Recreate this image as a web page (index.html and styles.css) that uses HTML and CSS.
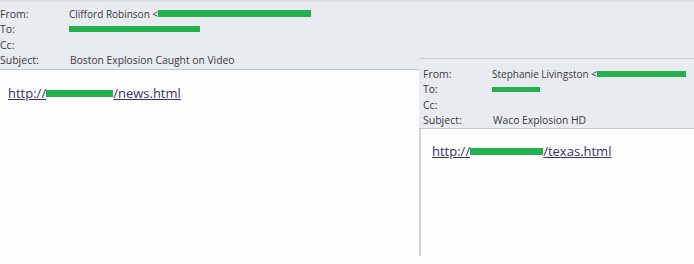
FILE: index.html
```html
<!DOCTYPE html>
<html lang="en">
<head>
    <meta charset="UTF-8">
    <title>Messages</title>
    <link rel="stylesheet" href="styles.css">
</head>
<body>
    <div class="message">
        <div class="header">
            <div class="row"><span class="label">From:</span><span class="value">Clifford Robinson &lt;<span class="redact from-a"></span></span></div>
            <div class="row"><span class="label">To:</span><span class="value"><span class="redact to-a"></span></span></div>
            <div class="row"><span class="label">Cc:</span><span class="value"></span></div>
            <div class="row"><span class="label">Subject:</span><span class="value subj">Boston Explosion Caught on Video</span></div>
        </div>
        <div class="content">
            <a class="link" href="#">http://<span class="redact link-a"></span>/news.html</a>
        </div>
    </div>

    <div class="message popup">
        <div class="header">
            <div class="row"><span class="label">From:</span><span class="value">Stephanie Livingston &lt;<span class="redact from-b"></span></span></div>
            <div class="row"><span class="label">To:</span><span class="value"><span class="redact to-b"></span></span></div>
            <div class="row"><span class="label">Cc:</span><span class="value"></span></div>
            <div class="row"><span class="label">Subject:</span><span class="value subj">Waco Explosion HD</span></div>
        </div>
        <div class="content">
            <a class="link" href="#">http://<span class="redact link-b"></span>/texas.html</a>
        </div>
    </div>
</body>
</html>
```

FILE: styles.css
```css
body {
    margin: 0;
    background: #fdfdfd;
    font-family: "Open Sans", Arial, sans-serif;
    color: #3a3a3a;
    width: 694px;
    height: 264px;
    overflow: hidden;
    position: relative;
}
.message {
    display: flex;
    flex-direction: column;
}
.header {
    background: #e8ebf0;
    border-top: 2px solid #dadde2;
    border-bottom: 1px solid #c4c6ca;
    padding: 4px 0 3px 0;
    height: 60px;
}
.row {
    display: flex;
    height: 15.5px;
    align-items: center;
    font-size: 10px;
}
.label {
    width: 69px;
    flex-shrink: 0;
    font-size: 10.5px;
}
.value {
    display: flex;
    align-items: center;
    white-space: nowrap;
}
.subj {
    font-size: 10.3px;
    padding-left: 1px;
}
.redact {
    display: inline-block;
    background: #22b14c;
    height: 7px;
}
.from-a { width: 153px; }
.to-a { width: 131px; height: 6px; }
.link-a { width: 67px; }
.from-b { width: 89px; height: 6px; }
.to-b { width: 48px; height: 5px; }
.link-b { width: 73px; }
.content {
    padding: 11px 8px;
}
.link {
    color: #38306f;
    font-size: 13px;
    text-decoration: underline;
    display: inline-flex;
    align-items: center;
}
.popup {
    position: absolute;
    left: 419px;
    top: 58px;
    width: 275px;
    height: 198px;
}
.popup .header {
    border-top: 1px solid #c9ccd1;
    padding: 7px 0 2px 4px;
    height: 60px;
}
.popup .content {
    flex: 1;
    background: #fdfdfd;
    border-left: 2px solid #d2d5da;
    padding: 10px 11px;
}
```
